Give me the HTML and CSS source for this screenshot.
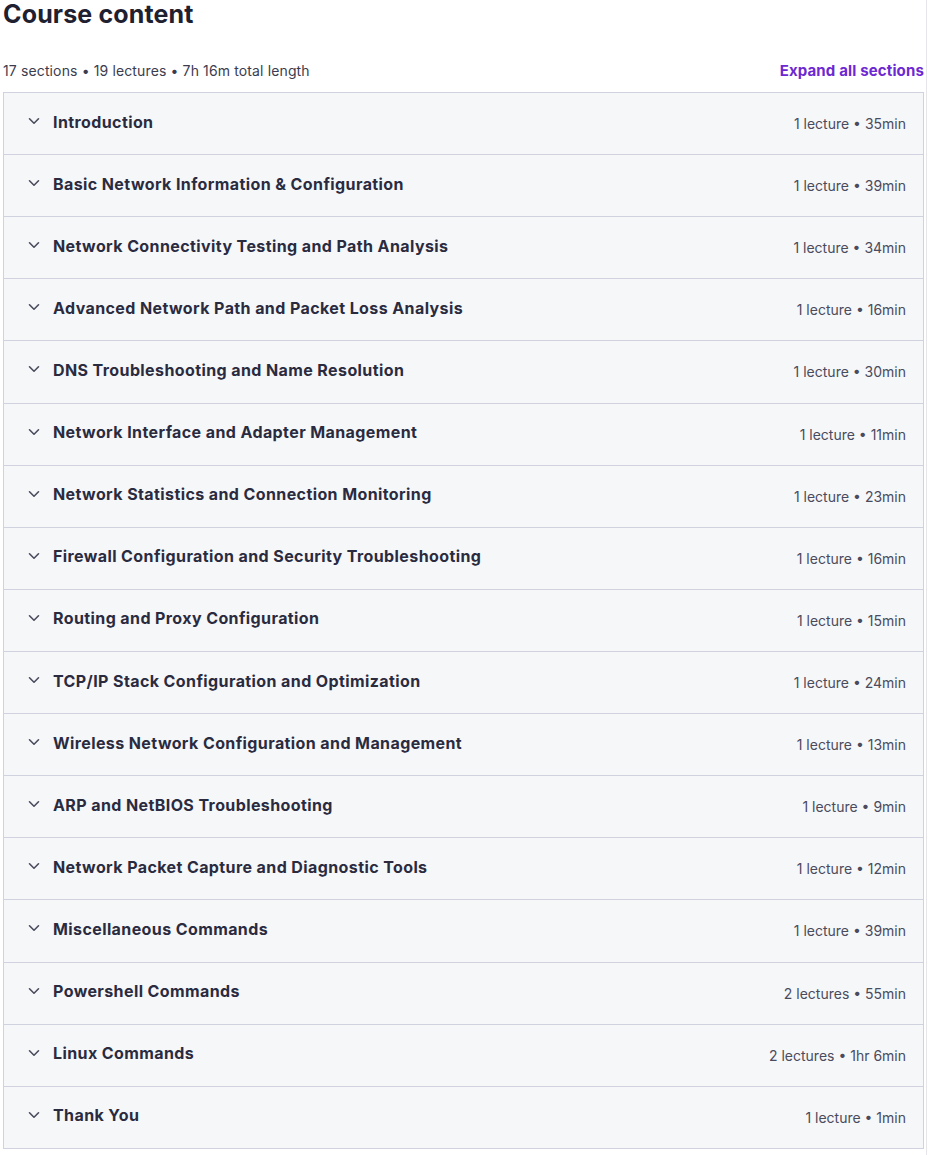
FILE: index.html
```html
<!DOCTYPE html>
<html lang="en">
<head>
<meta charset="utf-8">
<title>Course content</title>
<link rel="stylesheet" href="styles.css">
</head>
<body>
<div class="page">
  <h2 class="title">Course content</h2>
  <div class="meta">
    <span class="meta-text">17 sections • 19 lectures • 7h 16m total length</span>
    <button class="expand">Expand all sections</button>
  </div>
  <div class="sections">
    <div class="row"><span class="chev"><svg viewBox="0 0 12 8" width="12" height="8"><path d="M1.5 1.8 6 6.2 10.5 1.8"/></svg></span><span class="name">Introduction</span><span class="info">1 lecture • 35min</span></div>
    <div class="row"><span class="chev"><svg viewBox="0 0 12 8" width="12" height="8"><path d="M1.5 1.8 6 6.2 10.5 1.8"/></svg></span><span class="name">Basic Network Information &amp; Configuration</span><span class="info">1 lecture • 39min</span></div>
    <div class="row"><span class="chev"><svg viewBox="0 0 12 8" width="12" height="8"><path d="M1.5 1.8 6 6.2 10.5 1.8"/></svg></span><span class="name">Network Connectivity Testing and Path Analysis</span><span class="info">1 lecture • 34min</span></div>
    <div class="row"><span class="chev"><svg viewBox="0 0 12 8" width="12" height="8"><path d="M1.5 1.8 6 6.2 10.5 1.8"/></svg></span><span class="name">Advanced Network Path and Packet Loss Analysis</span><span class="info">1 lecture • 16min</span></div>
    <div class="row"><span class="chev"><svg viewBox="0 0 12 8" width="12" height="8"><path d="M1.5 1.8 6 6.2 10.5 1.8"/></svg></span><span class="name">DNS Troubleshooting and Name Resolution</span><span class="info">1 lecture • 30min</span></div>
    <div class="row"><span class="chev"><svg viewBox="0 0 12 8" width="12" height="8"><path d="M1.5 1.8 6 6.2 10.5 1.8"/></svg></span><span class="name">Network Interface and Adapter Management</span><span class="info">1 lecture • 11min</span></div>
    <div class="row"><span class="chev"><svg viewBox="0 0 12 8" width="12" height="8"><path d="M1.5 1.8 6 6.2 10.5 1.8"/></svg></span><span class="name">Network Statistics and Connection Monitoring</span><span class="info">1 lecture • 23min</span></div>
    <div class="row"><span class="chev"><svg viewBox="0 0 12 8" width="12" height="8"><path d="M1.5 1.8 6 6.2 10.5 1.8"/></svg></span><span class="name">Firewall Configuration and Security Troubleshooting</span><span class="info">1 lecture • 16min</span></div>
    <div class="row"><span class="chev"><svg viewBox="0 0 12 8" width="12" height="8"><path d="M1.5 1.8 6 6.2 10.5 1.8"/></svg></span><span class="name">Routing and Proxy Configuration</span><span class="info">1 lecture • 15min</span></div>
    <div class="row"><span class="chev"><svg viewBox="0 0 12 8" width="12" height="8"><path d="M1.5 1.8 6 6.2 10.5 1.8"/></svg></span><span class="name">TCP/IP Stack Configuration and Optimization</span><span class="info">1 lecture • 24min</span></div>
    <div class="row"><span class="chev"><svg viewBox="0 0 12 8" width="12" height="8"><path d="M1.5 1.8 6 6.2 10.5 1.8"/></svg></span><span class="name">Wireless Network Configuration and Management</span><span class="info">1 lecture • 13min</span></div>
    <div class="row"><span class="chev"><svg viewBox="0 0 12 8" width="12" height="8"><path d="M1.5 1.8 6 6.2 10.5 1.8"/></svg></span><span class="name">ARP and NetBIOS Troubleshooting</span><span class="info">1 lecture • 9min</span></div>
    <div class="row"><span class="chev"><svg viewBox="0 0 12 8" width="12" height="8"><path d="M1.5 1.8 6 6.2 10.5 1.8"/></svg></span><span class="name">Network Packet Capture and Diagnostic Tools</span><span class="info">1 lecture • 12min</span></div>
    <div class="row"><span class="chev"><svg viewBox="0 0 12 8" width="12" height="8"><path d="M1.5 1.8 6 6.2 10.5 1.8"/></svg></span><span class="name">Miscellaneous Commands</span><span class="info">1 lecture • 39min</span></div>
    <div class="row"><span class="chev"><svg viewBox="0 0 12 8" width="12" height="8"><path d="M1.5 1.8 6 6.2 10.5 1.8"/></svg></span><span class="name">Powershell Commands</span><span class="info">2 lectures • 55min</span></div>
    <div class="row"><span class="chev"><svg viewBox="0 0 12 8" width="12" height="8"><path d="M1.5 1.8 6 6.2 10.5 1.8"/></svg></span><span class="name">Linux Commands</span><span class="info">2 lectures • 1hr 6min</span></div>
    <div class="row"><span class="chev"><svg viewBox="0 0 12 8" width="12" height="8"><path d="M1.5 1.8 6 6.2 10.5 1.8"/></svg></span><span class="name">Thank You</span><span class="info">1 lecture • 1min</span></div>
  </div>
</div>
</body>
</html>
```
FILE: styles.css
```css
* { box-sizing: border-box; }
html, body { margin: 0; padding: 0; background: #ffffff; }
body {
  font-family: Inter, "Noto Sans", "Liberation Sans", sans-serif;
  color: #2a2b3f;
}
.page {
  width: 927px;
  padding-left: 3px;
  padding-right: 2px;
  border-right: 1px solid #e6e6ea;
  min-height: 1155px;
}
.title {
  margin: 0 0 31px 0;
  font-size: 25px;
  line-height: 28px;
  font-weight: 700;
  color: #1f2030;
  letter-spacing: 0.15px;
}
.meta {
  display: flex;
  justify-content: space-between;
  align-items: center;
  height: 22px;
  margin-bottom: 11px;
}
.meta-text {
  font-size: 14px;
  color: #3b3c4f;
  letter-spacing: 0.13px;
}
.expand {
  border: 0;
  background: none;
  padding: 0;
  font-family: inherit;
  font-size: 15px;
  font-weight: 700;
  color: #6d28d2;
  letter-spacing: 0.15px;
  cursor: pointer;
}
.sections {
  border: 1px solid #d1d2e0;
  width: 921px;
}
.row {
  display: flex;
  align-items: center;
  height: 62.12px;
  padding: 0 17px 0 24px;
  background: #f6f7f9;
  border-bottom: 1px solid #d1d2e0;
}
.row:last-child { border-bottom: 0; height: 61.12px; }
.chev {
  width: 25px;
  display: flex;
  align-items: center;
  margin-bottom: 5px;
}
.chev svg {
  fill: none;
  stroke: #4a4b5c;
  stroke-width: 1.6;
  stroke-linecap: round;
  stroke-linejoin: round;
}
.name {
  flex: 1;
  font-size: 16px;
  font-weight: 700;
  color: #2a2b3f;
  letter-spacing: 0.4px;
  margin-bottom: 4px;
}
.info {
  font-size: 14px;
  color: #4a4b5c;
}
```
